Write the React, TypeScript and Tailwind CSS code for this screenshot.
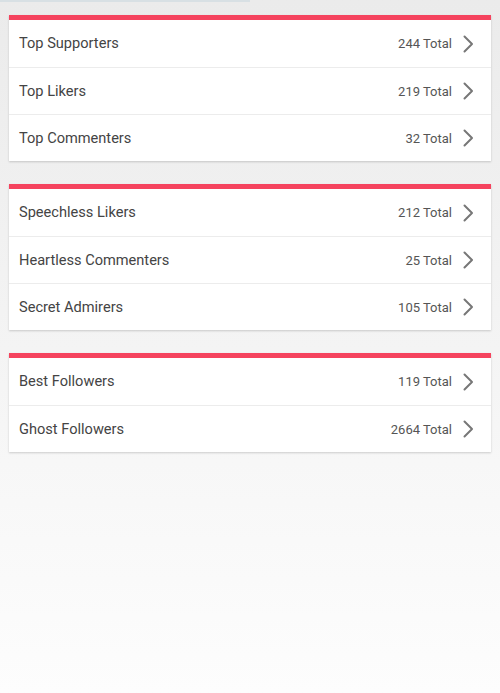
type Row = { label: string; total: number }

const groups: Row[][] = [
  [
    { label: 'Top Supporters', total: 244 },
    { label: 'Top Likers', total: 219 },
    { label: 'Top Commenters', total: 32 },
  ],
  [
    { label: 'Speechless Likers', total: 212 },
    { label: 'Heartless Commenters', total: 25 },
    { label: 'Secret Admirers', total: 105 },
  ],
  [
    { label: 'Best Followers', total: 119 },
    { label: 'Ghost Followers', total: 2664 },
  ],
]

export default function App() {
  return (
    <div className="relative min-h-[693px] w-[500px] bg-gradient-to-b from-[#ebebeb] to-[#fdfdfd] font-['Roboto',sans-serif] text-[#444]">
      {/* thin loading strip at the very top */}
      <div className="absolute left-0 top-0 h-[2px] w-[250px] bg-[#d8e0e4]" />

      <div className="flex flex-col gap-[23px] px-[9px] pt-[15px]">
        {groups.map((rows, i) => (
          <Card key={i} rows={rows} />
        ))}
      </div>
    </div>
  )
}

function Card({ rows }: { rows: Row[] }) {
  return (
    <div className="overflow-hidden bg-white shadow-[0_1px_2px_rgba(0,0,0,0.18)]">
      <div className="h-[5px] bg-[#f5435e]" />
      {rows.map((r, i) => (
        <div
          key={r.label}
          className={`flex h-[47px] items-center pl-[10px] pr-[17px] ${i > 0 ? 'border-t border-[#ececec]' : ''}`}
        >
          <span className="flex-1 text-[14.6px] leading-none">{r.label}</span>
          <span className="text-[13px] leading-none text-[#555]">{r.total} Total</span>
          <svg className="ml-[11px]" width="11" height="18" viewBox="0 0 11 18" fill="none">
            <path d="M1.5 1.5 L9 9 L1.5 16.5" stroke="#777" strokeWidth="2" strokeLinecap="round" strokeLinejoin="round" />
          </svg>
        </div>
      ))}
    </div>
  )
}
